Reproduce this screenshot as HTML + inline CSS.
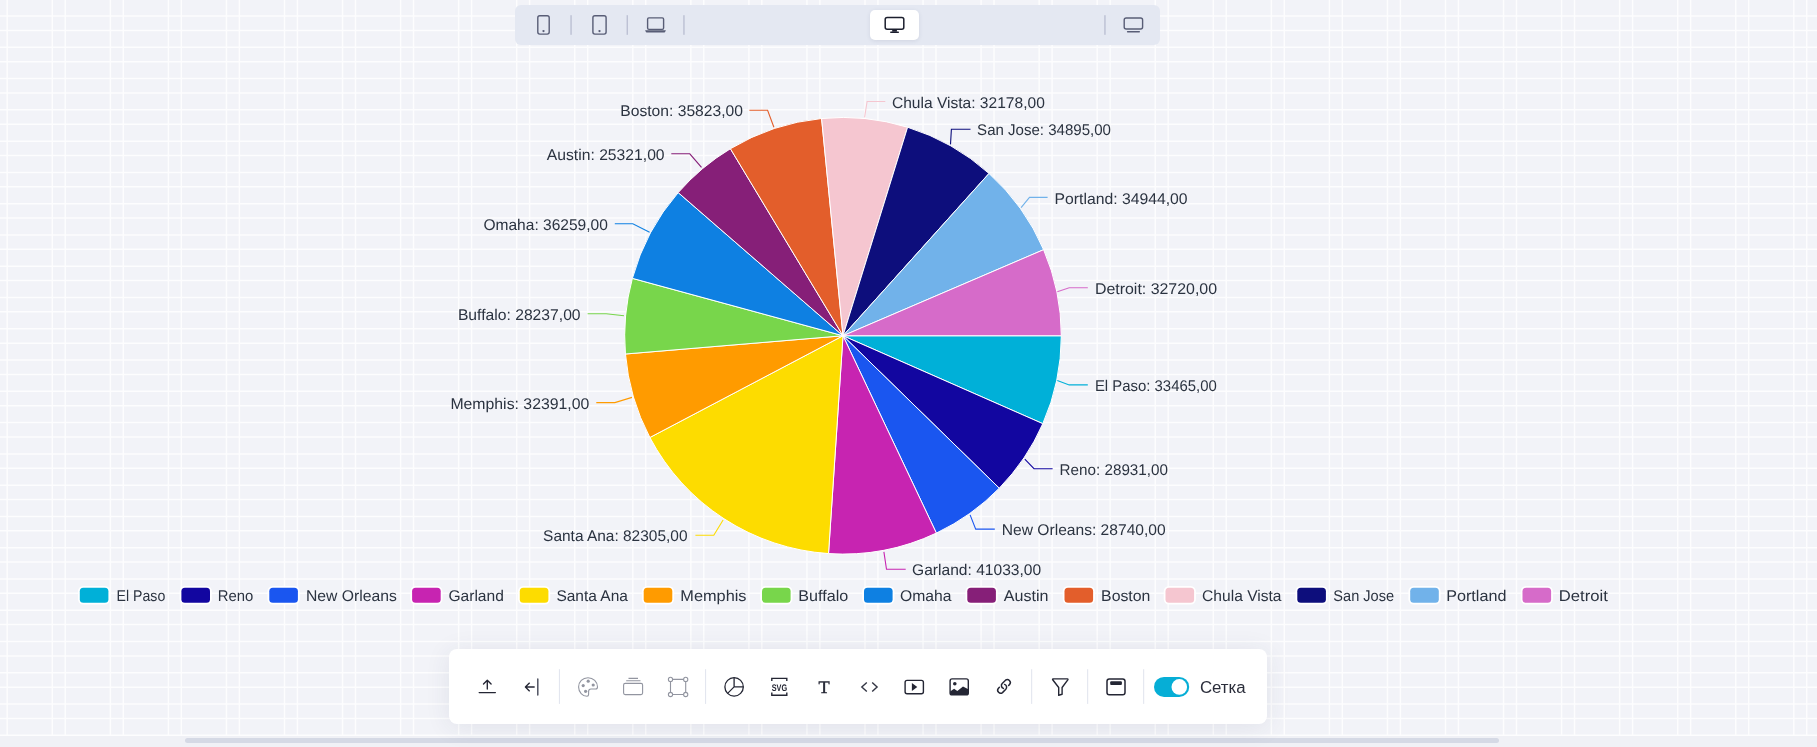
<!DOCTYPE html><html><head><meta charset="utf-8"><style>
html,body{margin:0;padding:0;}body{width:1817px;height:747px;overflow:hidden;background:#f2f3f8;position:relative;font-family:"Liberation Sans",sans-serif;}
svg{position:absolute;left:0;top:0;will-change:transform;}
.tb{position:absolute;left:515.2px;top:5px;width:645.3px;height:40px;background:#e4e8f2;border-radius:6px;}
.act{position:absolute;left:869.7px;top:9.9px;width:49.6px;height:30.1px;background:#fff;border-radius:5px;box-shadow:0 1px 4px rgba(40,50,90,0.10);}
.bt{position:absolute;left:449.3px;top:648.9px;width:817.4px;height:74.8px;background:#fff;border-radius:8px;box-shadow:0 3px 26px rgba(40,50,90,0.09);}
.track{position:absolute;left:0;top:735.8px;width:1817px;height:11.2px;background:#f0f1f6;}
.thumb{position:absolute;left:185px;top:737.9px;width:1314px;height:5.2px;background:#d5d9e5;border-radius:3px;}
</style></head><body>
<svg width="1817" height="747" viewBox="0 0 1817 747"><path d="M7.18 0V747 M52.30 0V747 M65.23 0V747 M110.35 0V747 M123.28 0V747 M168.40 0V747 M181.33 0V747 M226.45 0V747 M239.38 0V747 M284.50 0V747 M297.43 0V747 M342.55 0V747 M355.48 0V747 M400.60 0V747 M413.53 0V747 M458.65 0V747 M471.58 0V747 M516.70 0V747 M529.63 0V747 M574.75 0V747 M587.68 0V747 M632.80 0V747 M645.73 0V747 M690.85 0V747 M703.78 0V747 M748.90 0V747 M761.83 0V747 M806.95 0V747 M819.88 0V747 M865.00 0V747 M877.93 0V747 M923.05 0V747 M935.98 0V747 M981.10 0V747 M994.03 0V747 M1039.15 0V747 M1052.08 0V747 M1097.20 0V747 M1110.13 0V747 M1155.25 0V747 M1168.18 0V747 M1213.30 0V747 M1226.23 0V747 M1271.35 0V747 M1284.28 0V747 M1329.40 0V747 M1342.33 0V747 M1387.45 0V747 M1400.38 0V747 M1445.50 0V747 M1458.43 0V747 M1503.55 0V747 M1516.48 0V747 M1561.60 0V747 M1574.53 0V747 M1619.65 0V747 M1632.58 0V747 M1677.70 0V747 M1690.63 0V747 M1735.75 0V747 M1748.68 0V747 M1793.80 0V747 M1806.73 0V747 M0 16.05H1817 M0 30.40H1817 M0 47.33H1817 M0 61.67H1817 M0 78.60H1817 M0 92.95H1817 M0 109.87H1817 M0 124.22H1817 M0 141.15H1817 M0 155.50H1817 M0 172.43H1817 M0 186.78H1817 M0 203.70H1817 M0 218.05H1817 M0 234.97H1817 M0 249.32H1817 M0 266.25H1817 M0 280.60H1817 M0 297.52H1817 M0 311.87H1817 M0 328.80H1817 M0 343.15H1817 M0 360.07H1817 M0 374.42H1817 M0 391.35H1817 M0 405.70H1817 M0 422.62H1817 M0 436.97H1817 M0 453.90H1817 M0 468.25H1817 M0 485.18H1817 M0 499.52H1817 M0 516.45H1817 M0 530.80H1817 M0 547.72H1817 M0 562.07H1817 M0 579.00H1817 M0 593.35H1817 M0 610.27H1817 M0 624.62H1817 M0 641.55H1817 M0 655.90H1817 M0 672.82H1817 M0 687.17H1817 M0 704.10H1817 M0 718.45H1817 M0 735.37H1817" stroke="#ffffff" stroke-width="1.5" fill="none" opacity="0.8"/></svg>
<div class="track"></div><div class="thumb"></div>
<div class="tb"></div><div class="act"></div>
<div class="bt"></div>
<svg width="1817" height="747" viewBox="0 0 1817 747" style="font-family:'Liberation Sans',sans-serif;text-rendering:geometricPrecision"><path d="M843 335.75L1061.30 335.75A218.3 218.3 0 0 1 1042.81 423.67Z" fill="#00b0d8" stroke="#fff" stroke-width="1" stroke-linejoin="round"/><path d="M843 335.75L1042.81 423.67A218.3 218.3 0 0 1 999.28 488.17Z" fill="#1206a0" stroke="#fff" stroke-width="1" stroke-linejoin="round"/><path d="M843 335.75L999.28 488.17A218.3 218.3 0 0 1 936.36 533.08Z" fill="#1a56f0" stroke="#fff" stroke-width="1" stroke-linejoin="round"/><path d="M843 335.75L936.36 533.08A218.3 218.3 0 0 1 828.52 553.57Z" fill="#c724b1" stroke="#fff" stroke-width="1" stroke-linejoin="round"/><path d="M843 335.75L828.52 553.57A218.3 218.3 0 0 1 649.87 437.51Z" fill="#fddc00" stroke="#fff" stroke-width="1" stroke-linejoin="round"/><path d="M843 335.75L649.87 437.51A218.3 218.3 0 0 1 625.46 354.00Z" fill="#ff9b00" stroke="#fff" stroke-width="1" stroke-linejoin="round"/><path d="M843 335.75L625.46 354.00A218.3 218.3 0 0 1 632.38 278.35Z" fill="#78d64b" stroke="#fff" stroke-width="1" stroke-linejoin="round"/><path d="M843 335.75L632.38 278.35A218.3 218.3 0 0 1 678.20 192.59Z" fill="#0e80e2" stroke="#fff" stroke-width="1" stroke-linejoin="round"/><path d="M843 335.75L678.20 192.59A218.3 218.3 0 0 1 730.40 148.73Z" fill="#861f78" stroke="#fff" stroke-width="1" stroke-linejoin="round"/><path d="M843 335.75L730.40 148.73A218.3 218.3 0 0 1 821.60 118.50Z" fill="#e35e2b" stroke="#fff" stroke-width="1" stroke-linejoin="round"/><path d="M843 335.75L821.60 118.50A218.3 218.3 0 0 1 907.60 127.23Z" fill="#f5c6d0" stroke="#fff" stroke-width="1" stroke-linejoin="round"/><path d="M843 335.75L907.60 127.23A218.3 218.3 0 0 1 989.01 173.46Z" fill="#0d0e7c" stroke="#fff" stroke-width="1" stroke-linejoin="round"/><path d="M843 335.75L989.01 173.46A218.3 218.3 0 0 1 1043.61 249.68Z" fill="#71b2ea" stroke="#fff" stroke-width="1" stroke-linejoin="round"/><path d="M843 335.75L1043.61 249.68A218.3 218.3 0 0 1 1061.30 335.75Z" fill="#d66bc9" stroke="#fff" stroke-width="1" stroke-linejoin="round"/><polyline points="1057.3,380.5 1069.2,384.9 1087.8,384.9" fill="none" stroke="#00b0d8" stroke-width="1.1"/><text x="1094.9" y="390.9" font-size="15.5" fill="#2b3340" textLength="121.9" lengthAdjust="spacingAndGlyphs">El Paso: 33465,00</text><polyline points="1024.8,459.2 1034,468.7 1052.6,468.7" fill="none" stroke="#1206a0" stroke-width="1.1"/><text x="1059.6" y="474.9" font-size="15.5" fill="#2b3340" textLength="108.4" lengthAdjust="spacingAndGlyphs">Reno: 28931,00</text><polyline points="970.1,514.9 975.7,529.1 994.8,529.1" fill="none" stroke="#1a56f0" stroke-width="1.1"/><text x="1001.8" y="534.9" font-size="15.5" fill="#2b3340" textLength="163.9" lengthAdjust="spacingAndGlyphs">New Orleans: 28740,00</text><polyline points="883.9,551.8 886.5,569.3 905.7,569.3" fill="none" stroke="#c724b1" stroke-width="1.1"/><text x="912.1" y="574.9" font-size="15.5" fill="#2b3340" textLength="129.0" lengthAdjust="spacingAndGlyphs">Garland: 41033,00</text><polyline points="723.1,520 713.8,535.2 695.4,535.2" fill="none" stroke="#fddc00" stroke-width="1.1"/><text x="543.1" y="540.9" font-size="15.5" fill="#2b3340" textLength="144.4" lengthAdjust="spacingAndGlyphs">Santa Ana: 82305,00</text><polyline points="632,397.4 614.9,402.6 596.3,402.6" fill="none" stroke="#ff9b00" stroke-width="1.1"/><text x="450.4" y="408.9" font-size="15.5" fill="#2b3340" textLength="138.9" lengthAdjust="spacingAndGlyphs">Memphis: 32391,00</text><polyline points="624,315.8 606.2,313.8 587.6,313.8" fill="none" stroke="#78d64b" stroke-width="1.1"/><text x="457.9" y="319.9" font-size="15.5" fill="#2b3340" textLength="122.7" lengthAdjust="spacingAndGlyphs">Buffalo: 28237,00</text><polyline points="649.6,232.3 632.8,223.7 614.8,223.7" fill="none" stroke="#0e80e2" stroke-width="1.1"/><text x="483.4" y="229.9" font-size="15.5" fill="#2b3340" textLength="124.5" lengthAdjust="spacingAndGlyphs">Omaha: 36259,00</text><polyline points="701.5,167.4 689.8,153.8 671.3,153.8" fill="none" stroke="#861f78" stroke-width="1.1"/><text x="546.8" y="159.9" font-size="15.5" fill="#2b3340" textLength="117.8" lengthAdjust="spacingAndGlyphs">Austin: 25321,00</text><polyline points="773.9,127.3 767.6,110.3 749.4,110.3" fill="none" stroke="#e35e2b" stroke-width="1.1"/><text x="620.3" y="115.9" font-size="15.5" fill="#2b3340" textLength="122.7" lengthAdjust="spacingAndGlyphs">Boston: 35823,00</text><polyline points="864.6,117.4 867.1,101.5 885.3,101.5" fill="none" stroke="#f5c6d0" stroke-width="1.1"/><text x="891.9" y="107.9" font-size="15.5" fill="#2b3340" textLength="152.9" lengthAdjust="spacingAndGlyphs">Chula Vista: 32178,00</text><polyline points="950.5,144.4 951.4,129.3 970.5,129.3" fill="none" stroke="#0d0e7c" stroke-width="1.1"/><text x="977.1" y="134.9" font-size="15.5" fill="#2b3340" textLength="133.9" lengthAdjust="spacingAndGlyphs">San Jose: 34895,00</text><polyline points="1021.1,207.6 1029.5,197.4 1047.6,197.4" fill="none" stroke="#71b2ea" stroke-width="1.1"/><text x="1054.6" y="203.9" font-size="15.5" fill="#2b3340" textLength="133.0" lengthAdjust="spacingAndGlyphs">Portland: 34944,00</text><polyline points="1057.3,291.8 1069.2,287.8 1087.8,287.8" fill="none" stroke="#d66bc9" stroke-width="1.1"/><text x="1094.9" y="293.9" font-size="15.5" fill="#2b3340" textLength="122.2" lengthAdjust="spacingAndGlyphs">Detroit: 32720,00</text><rect x="79.8" y="587.8" width="28.6" height="15" rx="3.5" fill="#00b0d8" stroke="#fff" stroke-width="3.6" paint-order="stroke"/><text x="116.6" y="601" font-size="15.5" fill="#2b3340" textLength="48.7" lengthAdjust="spacingAndGlyphs">El Paso</text><rect x="181.4" y="587.8" width="28.6" height="15" rx="3.5" fill="#1206a0" stroke="#fff" stroke-width="3.6" paint-order="stroke"/><text x="217.8" y="601" font-size="15.5" fill="#2b3340" textLength="35.5" lengthAdjust="spacingAndGlyphs">Reno</text><rect x="269.3" y="587.8" width="28.6" height="15" rx="3.5" fill="#1a56f0" stroke="#fff" stroke-width="3.6" paint-order="stroke"/><text x="306.0" y="601" font-size="15.5" fill="#2b3340" textLength="90.9" lengthAdjust="spacingAndGlyphs">New Orleans</text><rect x="412.1" y="587.8" width="28.6" height="15" rx="3.5" fill="#c724b1" stroke="#fff" stroke-width="3.6" paint-order="stroke"/><text x="448.4" y="601" font-size="15.5" fill="#2b3340" textLength="55.5" lengthAdjust="spacingAndGlyphs">Garland</text><rect x="519.8" y="587.8" width="28.6" height="15" rx="3.5" fill="#fddc00" stroke="#fff" stroke-width="3.6" paint-order="stroke"/><text x="556.4" y="601" font-size="15.5" fill="#2b3340" textLength="71.5" lengthAdjust="spacingAndGlyphs">Santa Ana</text><rect x="643.7" y="587.8" width="28.6" height="15" rx="3.5" fill="#ff9b00" stroke="#fff" stroke-width="3.6" paint-order="stroke"/><text x="680.3" y="601" font-size="15.5" fill="#2b3340" textLength="66.2" lengthAdjust="spacingAndGlyphs">Memphis</text><rect x="762.0" y="587.8" width="28.6" height="15" rx="3.5" fill="#78d64b" stroke="#fff" stroke-width="3.6" paint-order="stroke"/><text x="798.3" y="601" font-size="15.5" fill="#2b3340" textLength="49.9" lengthAdjust="spacingAndGlyphs">Buffalo</text><rect x="864.0" y="587.8" width="28.6" height="15" rx="3.5" fill="#0e80e2" stroke="#fff" stroke-width="3.6" paint-order="stroke"/><text x="900.0" y="601" font-size="15.5" fill="#2b3340" textLength="51.5" lengthAdjust="spacingAndGlyphs">Omaha</text><rect x="967.3" y="587.8" width="28.6" height="15" rx="3.5" fill="#861f78" stroke="#fff" stroke-width="3.6" paint-order="stroke"/><text x="1003.8" y="601" font-size="15.5" fill="#2b3340" textLength="44.7" lengthAdjust="spacingAndGlyphs">Austin</text><rect x="1064.5" y="587.8" width="28.6" height="15" rx="3.5" fill="#e35e2b" stroke="#fff" stroke-width="3.6" paint-order="stroke"/><text x="1101.1" y="601" font-size="15.5" fill="#2b3340" textLength="49.3" lengthAdjust="spacingAndGlyphs">Boston</text><rect x="1165.5" y="587.8" width="28.6" height="15" rx="3.5" fill="#f5c6d0" stroke="#fff" stroke-width="3.6" paint-order="stroke"/><text x="1202.1" y="601" font-size="15.5" fill="#2b3340" textLength="79.4" lengthAdjust="spacingAndGlyphs">Chula Vista</text><rect x="1297.3" y="587.8" width="28.6" height="15" rx="3.5" fill="#0d0e7c" stroke="#fff" stroke-width="3.6" paint-order="stroke"/><text x="1333.3" y="601" font-size="15.5" fill="#2b3340" textLength="60.8" lengthAdjust="spacingAndGlyphs">San Jose</text><rect x="1410.2" y="587.8" width="28.6" height="15" rx="3.5" fill="#71b2ea" stroke="#fff" stroke-width="3.6" paint-order="stroke"/><text x="1446.2" y="601" font-size="15.5" fill="#2b3340" textLength="60.2" lengthAdjust="spacingAndGlyphs">Portland</text><rect x="1522.5" y="587.8" width="28.6" height="15" rx="3.5" fill="#d66bc9" stroke="#fff" stroke-width="3.6" paint-order="stroke"/><text x="1558.8" y="601" font-size="15.5" fill="#2b3340" textLength="49.0" lengthAdjust="spacingAndGlyphs">Detroit</text></svg>
<svg width="1817" height="747" viewBox="0 0 1817 747"><g fill="none" stroke="#585d76" stroke-width="1.4"><rect x="537.8" y="15.8" width="11.4" height="18.3" rx="2"/><rect x="592.9" y="15.8" width="13.2" height="18.3" rx="2"/><rect x="647.6" y="17.9" width="16" height="11.5" rx="1.3"/><rect x="1124.2" y="18" width="18.4" height="11" rx="2"/></g><circle cx="543.5" cy="31.1" r="1.15" fill="#585d76"/><circle cx="599.5" cy="31.1" r="1.15" fill="#585d76"/><path d="M645.1 30.2H665.9L665.2 31.8Q665 32.5 664.3 32.5H646.7Q646 32.5 645.8 31.8Z" fill="#585d76"/><rect x="1126.9" y="31.1" width="13.1" height="1.4" rx="0.7" fill="#585d76"/><rect x="570.4" y="15.2" width="1.3" height="19.6" fill="#b8bdd1"/><rect x="626.6" y="15.2" width="1.3" height="19.6" fill="#b8bdd1"/><rect x="683.3" y="15.2" width="1.3" height="19.6" fill="#b8bdd1"/><rect x="1104.3" y="15.2" width="1.3" height="19.6" fill="#b8bdd1"/><rect x="885.2" y="17.6" width="18.6" height="11.6" rx="2" fill="none" stroke="#1c1f2e" stroke-width="1.5"/><rect x="892.2" y="29.5" width="4.7" height="2.2" fill="#1c1f2e"/><rect x="890.2" y="31.5" width="8.7" height="1.4" rx="0.5" fill="#1c1f2e"/><rect x="558.9" y="669.2" width="1.1" height="34.7" fill="#e3e6ef"/><rect x="705.0" y="669.2" width="1.1" height="34.7" fill="#e3e6ef"/><rect x="1031.1" y="669.2" width="1.1" height="34.7" fill="#e3e6ef"/><rect x="1087.1" y="669.2" width="1.1" height="34.7" fill="#e3e6ef"/><rect x="1143.1" y="669.2" width="1.1" height="34.7" fill="#e3e6ef"/><g fill="none" stroke="#242634" stroke-width="1.35" stroke-linecap="round" stroke-linejoin="round"><path d="M487.3 689V680.4M483.5 684L487.3 680.2L491.1 684"/><path d="M479.2 692.6H495.4"/><path d="M534.2 687H525.6M529.4 683.1L525.4 687L529.4 690.9"/></g><path d="M537.8 678.9V695" stroke="#4a4d5c" stroke-width="1.45" stroke-linecap="round"/><g fill="none" stroke="#9295a0" stroke-width="1.1"><path d="M588 677.7C582.6 677.7 578.6 681.9 578.6 687C578.6 692.2 582.6 696.3 587 696.3C588.3 696.3 588.6 695.5 588.6 694.6V691.5C588.6 690.1 589.6 689 591 689H595.6C596.9 689 597.5 688.2 597.5 687C597.5 681.9 593.3 677.7 588 677.7Z"/><rect x="623.6" y="683.4" width="19" height="11.2" rx="1.6"/><path d="M626.2 680.7H640.5M628.5 678.4H638"/><path d="M672.7 679.4H683.5M672.7 694.5H683.5M670.5 681.6V692.3M685.7 681.6V692.3"/><circle cx="670.5" cy="679.4" r="2.1" fill="#fff"/><circle cx="685.7" cy="679.4" r="2.1" fill="#fff"/><circle cx="670.5" cy="694.5" r="2.1" fill="#fff"/><circle cx="685.7" cy="694.5" r="2.1" fill="#fff"/></g><circle cx="588.2" cy="681.2" r="1.6" fill="#9295a0"/><circle cx="583.2" cy="685.6" r="1.6" fill="#9295a0"/><circle cx="593.2" cy="685" r="1.6" fill="#9295a0"/><circle cx="585.6" cy="691.3" r="1.6" fill="#9295a0"/><g fill="none" stroke="#242634" stroke-width="1.3"><circle cx="734.1" cy="686.9" r="9.2"/><path d="M734.1 677.7V686.9H743.3M734.1 686.9L727.6 693.4"/><path d="M771.8 681V678.4H786.8V681M771.8 692.4V695.3H786.8V692.4" stroke-width="1.4"/><path d="M866.8 682.5L861.8 687L866.8 691.5M872.2 682.5L877.1 687L872.2 691.5" stroke="#333644" stroke-width="1.4"/><rect x="905.1" y="680.4" width="18.3" height="13.3" rx="2" stroke-width="1.4"/><rect x="950.1" y="678.9" width="18.2" height="16" rx="2" stroke-width="1.4"/><path d="M1008.6 685.5L1009.7 684.4A3 3 0 0 0 1005.5 680.2L1002.2 683.5A3 3 0 0 0 1003.4 688.4M999.4 687.3L998.3 688.4A3 3 0 0 0 1002.5 692.6L1005.8 689.3A3 3 0 0 0 1004.6 684.4" stroke-width="1.5" stroke-linecap="round"/><path d="M1053 678.9H1067.5Q1068.3 678.9 1067.8 679.8L1062.1 687.5V694.3L1058.7 695.2V687.5L1052.7 679.8Q1052.3 678.9 1053 678.9Z" stroke-width="1.4" stroke-linejoin="round"/><rect x="1107" y="679" width="18" height="15.8" rx="2.3" stroke-width="1.5"/></g><text x="771.7" y="690.5" font-family="Liberation Sans" font-weight="bold" font-size="9.6" fill="#242634" textLength="15.4" lengthAdjust="spacingAndGlyphs" style="text-rendering:geometricPrecision">SVG</text><text x="818.6" y="693.4" font-family="Liberation Serif" font-size="17.6" style="text-rendering:geometricPrecision" stroke="#242634" stroke-width="0.35" fill="#242634" textLength="11.2" lengthAdjust="spacingAndGlyphs">T</text><path d="M911.9 682.9V690.9L917.3 686.9Z" fill="#242634"/><circle cx="954.8" cy="683.8" r="1.8" fill="#242634"/><path d="M950.1 691.5L954.1 688.8L957.3 691L963 686.6L968.3 689.3V693.1Q968.3 694.9 966.3 694.9H952.1Q950.1 694.9 950.1 693.1Z" fill="#242634"/><rect x="1110.2" y="681.2" width="11.7" height="3.8" rx="1" fill="#242634"/><rect x="1154" y="676.9" width="35.2" height="20" rx="10" fill="#06aed6"/><circle cx="1179.3" cy="686.9" r="7.8" fill="#fff"/><text x="1199.9" y="692.9" font-size="15.8" fill="#2b2e3b" textLength="45.8" lengthAdjust="spacingAndGlyphs">Сетка</text></svg>
</body></html>
